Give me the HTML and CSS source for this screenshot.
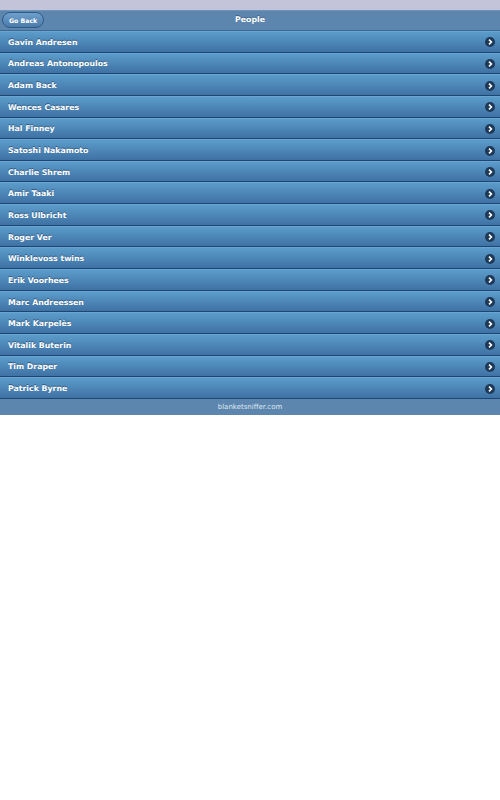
FILE: index.html
```html
<!DOCTYPE html>
<html lang="en">
<head>
    <meta charset="UTF-8">
    <meta name="viewport" content="width=device-width, initial-scale=1.0">
    <title>People</title>
    <link rel="stylesheet" href="styles.css">
</head>
<body>
    <div class="status-strip"></div>

    <!-- Шапка -->
    <div class="toolbar">
        <a class="back-btn" href="#">Go Back</a>
        <h1>People</h1>
    </div>

    <ul class="people-list">
        <li><a href="#">Gavin Andresen</a></li>
        <li><a href="#">Andreas Antonopoulos</a></li>
        <li><a href="#">Adam Back</a></li>
        <li><a href="#">Wences Casares</a></li>
        <li><a href="#">Hal Finney</a></li>
        <li><a href="#">Satoshi Nakamoto</a></li>
        <li><a href="#">Charlie Shrem</a></li>
        <li><a href="#">Amir Taaki</a></li>
        <li><a href="#">Ross Ulbricht</a></li>
        <li><a href="#">Roger Ver</a></li>
        <li><a href="#">Winklevoss twins</a></li>
        <li><a href="#">Erik Voorhees</a></li>
        <li><a href="#">Marc Andreessen</a></li>
        <li><a href="#">Mark Karpelès</a></li>
        <li><a href="#">Vitalik Buterin</a></li>
        <li><a href="#">Tim Draper</a></li>
        <li><a href="#">Patrick Byrne</a></li>
    </ul>

    <div class="footer">blanketsniffer.com</div>
</body>
</html>
```

FILE: styles.css
```css
body {
    font-family: 'DejaVu Sans', sans-serif;
    background-color: #fff;
    margin: 0;
    padding: 0;
}

.status-strip {
    height: 10px;
    background-color: #c3c3da;
}

.toolbar {
    height: 21px;
    box-sizing: border-box;
    background-color: #5d86ae;
    border-top: 1px solid #6e94b8;
    border-bottom: 1px solid #3c6690;
    display: flex;
    align-items: center;
    justify-content: center;
    position: relative;
}

.toolbar h1 {
    margin: 0 0 3px;
    font-size: 7.8px;
    font-weight: bold;
    color: #fff;
    text-shadow: 0 -1px 0 #3a5f85;
}

.back-btn {
    position: absolute;
    left: 2px;
    top: 1px;
    height: 16px;
    padding: 0 6px;
    display: flex;
    align-items: center;
    font-size: 6.2px;
    font-weight: bold;
    color: #fff;
    text-decoration: none;
    border-radius: 8px;
    border: 1px solid #2f5a86;
    background: linear-gradient(#6f9fcb, #4b7bab);
    box-sizing: border-box;
}

.people-list {
    list-style: none;
    margin: 0;
    padding: 0;
}

.people-list li {
    height: 21.65px;
    box-sizing: border-box;
    border-top: 1px solid #6aa4d0;
    border-bottom: 1px solid #1e4673;
    background: linear-gradient(#5b9cca, #3f72a4);
}

.people-list a {
    display: flex;
    align-items: center;
    height: 100%;
    box-sizing: border-box;
    padding: 1px 8px 0;
    font-size: 7.8px;
    font-weight: bold;
    color: #fff;
    text-decoration: none;
    text-shadow: 0 -1px 0 #2b5580;
    position: relative;
}

.people-list a::after {
    content: "";
    position: absolute;
    right: 5px;
    top: 50%;
    margin-top: -4.5px;
    width: 10px;
    height: 10px;
    border-radius: 50%;
    background: #1d3957 url("data:image/svg+xml,%3Csvg xmlns='http://www.w3.org/2000/svg' viewBox='0 0 10 10'%3E%3Cpath d='M4 2.6 L6.4 5 L4 7.4' fill='none' stroke='white' stroke-width='1.6'/%3E%3C/svg%3E") center / 10px 10px no-repeat;
}

.footer {
    height: 16px;
    background-color: #5d86ae;
    color: #dde8f3;
    font-size: 7px;
    display: flex;
    align-items: center;
    justify-content: center;
}
```
